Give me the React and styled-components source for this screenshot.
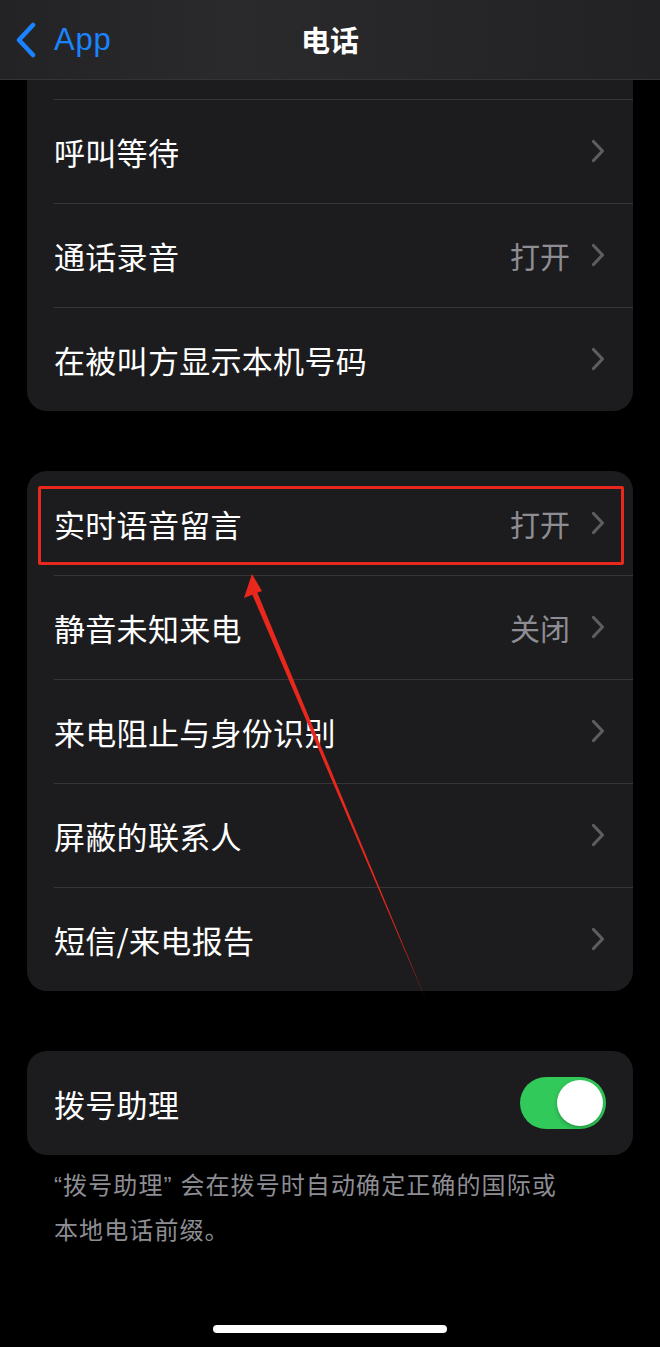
import styled, { createGlobalStyle } from "styled-components";

const GlobalStyle = createGlobalStyle`
  * { box-sizing: border-box; }
  body {
    margin: 0;
    background: #000000;
    font-family: "Noto Sans CJK SC", "Noto Sans", "Liberation Sans", sans-serif;
  }
`;

const topRows = [
  { label: "呼叫等待" },
  { label: "通话录音", value: "打开" },
  { label: "在被叫方显示本机号码" },
];

const middleRows = [
  { label: "实时语音留言", value: "打开", marked: true },
  { label: "静音未知来电", value: "关闭" },
  { label: "来电阻止与身份识别" },
  { label: "屏蔽的联系人" },
  { label: "短信/来电报告" },
];

const Chevron = () => (
  <svg width="16" height="24" viewBox="0 0 16 24" fill="none">
    <path
      d="M3.5 2.5 L12.5 12 L3.5 21.5"
      stroke="#5c5c61"
      strokeWidth="3.2"
      strokeLinecap="round"
      strokeLinejoin="round"
    />
  </svg>
);

const BackChevron = () => (
  <svg width="24" height="36" viewBox="0 0 24 36" fill="none">
    <path
      d="M19 3 L5 18 L19 33"
      stroke="#1a84ff"
      strokeWidth="4.5"
      strokeLinecap="round"
      strokeLinejoin="round"
    />
  </svg>
);

const Row = ({ label, value, marked, first }) => (
  <RowBox $first={first}>
    <Label>{label}</Label>
    <Trail>
      {value && <Value>{value}</Value>}
      <Chevron />
    </Trail>
    {marked && <Mark />}
  </RowBox>
);

const App = () => {
  return (
    <Page>
      <GlobalStyle />
      <NavBar>
        <Back>
          <BackChevron />
          <BackText>App</BackText>
        </Back>
        <Title>电话</Title>
        <span />
      </NavBar>

      <Content>
        <Card $cut>
          <PartialRow />
          {topRows.map((r) => (
            <Row key={r.label} {...r} />
          ))}
        </Card>

        <Card>
          {middleRows.map((r, i) => (
            <Row key={r.label} {...r} first={i === 0} />
          ))}
        </Card>

        <Card>
          <RowBox $first>
            <Label>拨号助理</Label>
            <Toggle>
              <Knob />
            </Toggle>
          </RowBox>
        </Card>

        <Footer>
          <Quote>“</Quote>拨号助理<Quote>” </Quote>会在拨号时自动确定正确的国际或
          <br />
          本地电话前缀。
        </Footer>
      </Content>

      <HomeBar />

      <Arrow viewBox="0 0 660 1347" width="660" height="1347">
        <polygon points="249.5,588 255,587 426,1000" fill="#e8271d" />
        <polygon points="252,574 244,598 262,591" fill="#e8271d" />
      </Arrow>
    </Page>
  );
};

export default App;

const Page = styled.div`
  position: relative;
  width: 660px;
  height: 1347px;
  background: #000000;
  display: flex;
  flex-direction: column;
  overflow: hidden;
`;

const NavBar = styled.div`
  height: 80px;
  display: grid;
  grid-template-columns: 1fr auto 1fr;
  align-items: center;
  padding: 0 14px;
  background: linear-gradient(90deg, #232325 0%, #2a2a2c 35%, #262628 70%, #222224 100%);
  border-bottom: 1px solid #343436;
`;

const Back = styled.div`
  display: flex;
  align-items: center;
  gap: 16px;
`;

const BackText = styled.span`
  font-family: "Liberation Sans", "Noto Sans", sans-serif;
  font-size: 31px;
  color: #1a84ff;
  letter-spacing: 0.8px;
`;

const Title = styled.div`
  font-size: 29px;
  font-weight: 700;
  color: #ffffff;
  margin-top: -2px;
`;

const Content = styled.div`
  display: flex;
  flex-direction: column;
  padding: 0 27px;
  gap: 60px;
`;

const Card = styled.div`
  background: #1c1c1e;
  border-radius: ${(p) => (p.$cut ? "0 0 20px 20px" : "20px")};
  overflow: hidden;
`;

const PartialRow = styled.div`
  height: 19px;
`;

const RowBox = styled.div`
  position: relative;
  height: 104px;
  display: flex;
  align-items: center;
  justify-content: space-between;
  padding: 0 27px 0 27px;
  &::before {
    content: "";
    display: ${(p) => (p.$first ? "none" : "block")};
    position: absolute;
    top: 0;
    left: 27px;
    right: 0;
    height: 1px;
    background: #363638;
  }
`;

const Label = styled.span`
  font-size: 31px;
  color: #ffffff;
  letter-spacing: 0.3px;
`;

const Trail = styled.div`
  display: flex;
  align-items: center;
  gap: 20px;
`;

const Value = styled.span`
  font-size: 30px;
  color: #8d8d93;
`;

const Mark = styled.div`
  position: absolute;
  left: 11px;
  right: 9px;
  top: 15px;
  bottom: 10px;
  border: 3px solid #e8271d;
  border-radius: 2px;
`;

const Toggle = styled.div`
  width: 86px;
  height: 52px;
  border-radius: 26px;
  background: #31c95a;
  display: flex;
  align-items: center;
  justify-content: flex-end;
  padding: 3px;
`;

const Knob = styled.div`
  width: 46px;
  height: 46px;
  border-radius: 50%;
  background: #ffffff;
  box-shadow: 0 2px 4px rgba(0, 0, 0, 0.25);
`;

const Footer = styled.p`
  margin: -53px 0 0;
  padding: 0 27px;
  font-size: 24px;
  line-height: 43px;
  letter-spacing: 1.1px;
  color: #8d8d93;
`;

const Quote = styled.span`
  font-family: "Liberation Sans", sans-serif;
`;

const HomeBar = styled.div`
  width: 234px;
  height: 8px;
  border-radius: 4px;
  background: #ffffff;
  margin: auto auto 14px;
`;

const Arrow = styled.svg`
  position: absolute;
  left: 0;
  top: 0;
  pointer-events: none;
`;
